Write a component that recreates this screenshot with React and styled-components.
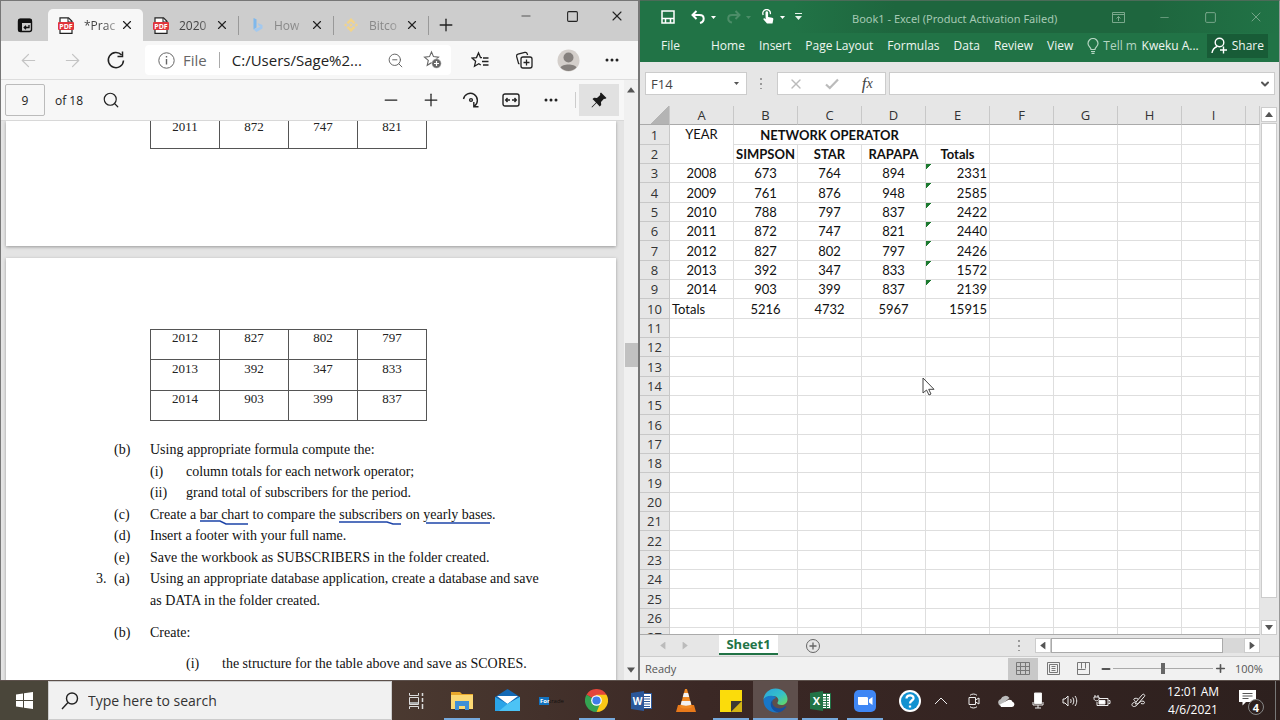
import styled, { createGlobalStyle, css } from "styled-components";
import {
  ArrowLeft,
  ArrowRight,
  ChevronDown,
  Minus,
  Plus,
  Search,
  Square,
  X,
  ZoomOut,
} from "lucide-react";

const browserTabs = [
  { title: "*Prac", icon: <PdfIcon />, active: true },
  { title: "2020", icon: <PdfIcon /> },
  { title: "How", icon: <BingIcon />, faded: true },
  { title: "Bitco", icon: <CoinIcon />, faded: true },
];

const subscribersTop = [["2011", "872", "747", "821"]];
const subscribersRest = [
  ["2012", "827", "802", "797"],
  ["2013", "392", "347", "833"],
  ["2014", "903", "399", "837"],
];

const sheetRows = [
  ["2008", 673, 764, 894, 2331],
  ["2009", 761, 876, 948, 2585],
  ["2010", 788, 797, 837, 2422],
  ["2011", 872, 747, 821, 2440],
  ["2012", 827, 802, 797, 2426],
  ["2013", 392, 347, 833, 1572],
  ["2014", 903, 399, 837, 2139],
];

const columns = ["A", "B", "C", "D", "E", "F", "G", "H", "I"];
const emptyRows = Array.from({ length: 17 }, (_, i) => i + 11);
const ribbonTabs = ["Home", "Insert", "Page Layout", "Formulas", "Data", "Review", "View"];

const apps = [
  { name: "File Explorer", icon: <FolderIcon />, running: true },
  { name: "Mail", icon: <MailIcon /> },
  { name: "Fortrade", icon: <FortradeLogo /> },
  { name: "Chrome", icon: <ChromeIcon />, running: true },
  { name: "Word", icon: <WordIcon /> },
  { name: "VLC", icon: <VlcIcon /> },
  { name: "Sticky Notes", icon: <NotesIcon />, running: true },
  { name: "Edge", icon: <EdgeIcon />, running: true, active: true },
  { name: "Excel", icon: <ExcelIcon />, running: true },
  { name: "Zoom", icon: <ZoomIcon />, running: true },
  { name: "Help", icon: <HelpIcon /> },
];

export default function App() {
  return (
    <>
      <GlobalStyle />
      <Screen>
        <Desktop>
          <Browser />
          <Excel />
        </Desktop>
        <Taskbar />
      </Screen>
    </>
  );
}

function Browser() {
  return (
    <BrowserWindow>
      <TabStrip>
        <TabMenuButton aria-label="Tab actions">
          <svg width="16" height="16" viewBox="0 0 16 16">
            <rect x="1.5" y="2.5" width="13" height="12" rx="2" fill="none" stroke="#111" strokeWidth="1.4" />
            <path d="M1 3.5q0-2 2-2h10q2 0 2 2V6H5v9H3q-2 0-2-2z" fill="#111" />
            <path d="M12 8v2.5H7.5M9 8.7L7.2 10.5 9 12.3" fill="none" stroke="#111" strokeWidth="1.3" />
          </svg>
        </TabMenuButton>
        {browserTabs.map((tab) => (
          <Tab key={tab.title} $active={tab.active} $faded={tab.faded}>
            {tab.icon}
            <TabTitle>{tab.title}</TabTitle>
            <TabClose aria-label="Close tab">
              <X size={14} strokeWidth={2} />
            </TabClose>
          </Tab>
        ))}
        <NewTab aria-label="New tab">
          <Plus size={20} strokeWidth={1.6} />
        </NewTab>
        <WindowButtons>
          <button aria-label="Minimize"><Minus size={14} strokeWidth={1.2} /></button>
          <button aria-label="Maximize"><Square size={13} strokeWidth={2} /></button>
          <button aria-label="Close"><X size={16} strokeWidth={1.6} /></button>
        </WindowButtons>
      </TabStrip>

      <NavBar>
        <NavButton aria-label="Back" $dim><ArrowLeft size={21} strokeWidth={1.4} /></NavButton>
        <NavButton aria-label="Forward" $dim><ArrowRight size={21} strokeWidth={1.4} /></NavButton>
        <NavButton aria-label="Refresh">
          <svg width="20" height="20" viewBox="0 0 20 20" fill="none" stroke="#222" strokeWidth="1.5">
            <path d="M17.5 10.5A7.6 7.6 0 1 1 15.6 5" />
            <path d="M16.5 1.5v5h-5" />
          </svg>
        </NavButton>
        <AddressBar>
          <svg width="17" height="17" viewBox="0 0 17 17" fill="none" stroke="#666">
            <circle cx="8.5" cy="8.5" r="7.7" />
            <path d="M8.5 7v5.5M8.5 4v1.5" strokeWidth="1.4" />
          </svg>
          <Scheme>File</Scheme>
          <AddressInput aria-label="Address" defaultValue="C:/Users/Sage%2..." />
          <AddressIcon aria-label="Zoom out"><ZoomOut size={17} strokeWidth={1.4} /></AddressIcon>
          <AddressIcon aria-label="Add to favorites">
            <svg width="20" height="20" viewBox="0 0 20 20">
              <path d="M8.500 2l2 4.600 5 .5-3.800 3.300 1.100 4.900-4.300-2.600-4.300 2.600 1.100-4.900L1.500 7.100l5-.5z" fill="none" stroke="#666" strokeWidth="1.1" />
              <circle cx="13.5" cy="13.5" r="4.8" fill="#666" stroke="#fff" strokeWidth=".6" />
              <path d="M13.5 11v5M11 13.5h5" stroke="#fff" strokeWidth="1.2" />
            </svg>
          </AddressIcon>
        </AddressBar>
        <NavButton aria-label="Favorites">
          <svg width="19" height="19" viewBox="0 0 19 19" fill="none" stroke="#222" strokeWidth="1.3">
            <path d="M11 6.7L9.5 6.6 7.5 2l-2 4.6-4.5.5 3.6 3.2-1.1 4.9 4.3-2.5 2 1.3M12 7h5.5M11 10.5h6.5M12 14h5.5" />
          </svg>
        </NavButton>
        <NavButton aria-label="Collections">
          <svg width="19" height="19" viewBox="0 0 19 19" fill="none" stroke="#222" strokeWidth="1.3">
            <rect x="6" y="6" width="11" height="11" rx="2" />
            <path d="M4.5 13L3.6 12.6 1.600 5.4a2 2 0 0 1 1.4-2.3L9.8 1.4a2 2 0 0 1 2.4 1.4L12.6 4M11.5 8.5v6M8.5 11.5h6" />
          </svg>
        </NavButton>
        <NavButton aria-label="Profile">
          <svg width="23" height="23" viewBox="0 0 23 23">
            <circle cx="11.5" cy="11.5" r="11" fill="#d4cfcb" />
            <circle cx="11.5" cy="8.5" r="5" fill="#85807d" />
            <path d="M3.5 18.5c1.5-4 14.5-4 16 0a11 11 0 0 1-16 0z" fill="#85807d" />
          </svg>
        </NavButton>
        <NavButton aria-label="Settings and more"><DotsIcon /></NavButton>
      </NavBar>

      <Viewer>
        <ViewerMain>
          <PdfToolbar>
            <PageInput aria-label="Page number" defaultValue="9" />
            <PageCount>of 18</PageCount>
            <PdfButton aria-label="Find"><Search size={18} strokeWidth={1.6} /></PdfButton>
            <Spacer />
            <PdfButton aria-label="Zoom out"><Minus size={20} strokeWidth={1.5} /></PdfButton>
            <PdfButton aria-label="Zoom in"><Plus size={20} strokeWidth={1.5} /></PdfButton>
            <PdfButton aria-label="Rotate">
              <svg width="18" height="18" viewBox="0 0 18 18" fill="none" stroke="#222" strokeWidth="1.4">
                <path d="M1.5 8A7 7 0 1 1 12.500 15M16.500 15.700H11.800V11" />
                <circle cx="9" cy="9" r="1.4" />
              </svg>
            </PdfButton>
            <PdfButton aria-label="Fit to width">
              <svg width="18" height="14" viewBox="0 0 18 14" fill="none" stroke="#222" strokeWidth="1.4">
                <rect x="1" y="1" width="16" height="12" rx="2" />
                <path d="M8 7H4M5.5 5L3.7 7l1.8 2M10 7h4M12.5 5l1.8 2-1.8 2" />
              </svg>
            </PdfButton>
            <PdfButton aria-label="More"><DotsIcon /></PdfButton>
            <Divider />
            <PinButton aria-label="Pin toolbar">
              <svg width="18" height="18" viewBox="0 0 18 18">
                <path d="M11 1.5l5.5 5.5-1.5 1-1-.2-3 3.2.2 3-1.5 1.5L6.500 12 2 16.500 1.500 16 6 11.500 2.500 8 4 6.700l3 .2L10.200 4 10 2.500z" fill="#1a1a1a" />
              </svg>
            </PinButton>
          </PdfToolbar>
          <PdfPages>
            <PdfPage $first>
              <SubscriberTable rows={subscribersTop} />
            </PdfPage>
            <PdfPage>
              <SubscriberTable rows={subscribersRest} />
              <Questions>
                <Question><span /><span>(b)</span><p>Using appropriate formula compute the:</p></Question>
                <Question $level={1}><span>(i)</span><p>column totals for each network operator;</p></Question>
                <Question $level={1}><span>(ii)</span><p>grand total of subscribers for the period.</p></Question>
                <Question>
                  <span /><span>(c)</span>
                  <p>
                    Create a <Ink d="M0 2h20l6 3h22">bar chart</Ink> to compare the{" "}
                    <Ink d="M0 3h48l6 2h8">subscribers</Ink> on <Ink d="M3 4h64">yearly bases</Ink>.
                  </p>
                </Question>
                <Question><span /><span>(d)</span><p>Insert a footer with your full name.</p></Question>
                <Question><span /><span>(e)</span><p>Save the workbook as SUBSCRIBERS in the folder created.</p></Question>
                <Question>
                  <span>3.</span><span>(a)</span>
                  <p>
                    Using an appropriate database application, create a database and save
                    <br />
                    as DATA in the folder created.
                  </p>
                </Question>
                <Question $spaced><span /><span>(b)</span><p>Create:</p></Question>
                <Question $level={2} $spaced><span>(i)</span><p>the structure for the table above and save as SCORES.</p></Question>
              </Questions>
            </PdfPage>
          </PdfPages>
        </ViewerMain>
        <BrowserScroll>
          <ScrollArrow $dir="up" />
          <BrowserThumb />
          <ScrollArrow $dir="down" />
        </BrowserScroll>
      </Viewer>
    </BrowserWindow>
  );
}

function SubscriberTable({ rows }) {
  return (
    <PaperTable>
      <tbody>
        {rows.map((row) => (
          <tr key={row[0]}>
            {row.map((cell, i) => (
              <td key={i}>{cell}</td>
            ))}
          </tr>
        ))}
      </tbody>
    </PaperTable>
  );
}

function Ink({ d, children }) {
  return (
    <InkWord>
      {children}
      <svg height="8" width="100%" fill="none" stroke="#1d44a8" strokeWidth="1.6">
        <path d={d} />
      </svg>
    </InkWord>
  );
}

function Excel() {
  return (
    <ExcelWindow>
      <TitleBar>
        <QuickAccess>
          <button aria-label="Save">
            <svg width="14" height="14" viewBox="0 0 14 14" fill="none" stroke="#fff" strokeWidth="1.5">
              <path d="M1 1h12v12H1z" />
              <path d="M1 8.500h12M4.500 9v4M9.500 9v4" />
            </svg>
          </button>
          <button aria-label="Undo">
            <UndoIcon />
            <Caret />
          </button>
          <RedoButton aria-label="Redo">
            <UndoIcon flip />
            <Caret />
          </RedoButton>
          <button aria-label="Touch mode">
            <svg width="14" height="16" viewBox="0 0 14 16">
              <path d="M4.500 5.500V3.500a1.300 1.300 0 0 1 2.600 0V8l4 .8c1 .2 1.400.8 1.200 1.800l-.8 4H6L2.500 10.500c-.5-.8.6-1.600 1.300-1l.9.8z" fill="#fff" />
              <path d="M2.200 6A3.800 3.800 0 1 1 9.300 5.200" fill="none" stroke="#fff" strokeWidth="1.3" />
            </svg>
            <Caret />
          </button>
          <button aria-label="Customize toolbar">
            <svg width="7" height="8" viewBox="0 0 7 8"><path d="M0 0h7v1H0zM0 3h7L3.500 7z" fill="#e6f2eb" /></svg>
          </button>
        </QuickAccess>
        <BookTitle>Book1 - Excel (Product Activation Failed)</BookTitle>
        <ExcelButtons>
          <button aria-label="Ribbon display">
            <svg width="13" height="11" viewBox="0 0 13 11" fill="none" stroke="currentColor">
              <path d="M.5.5h12v10H.5zM.5 2.500h12M6.500 9V4.500M4.500 6.500l2-2 2 2" />
            </svg>
          </button>
          <button aria-label="Minimize"><Minus size={13} strokeWidth={1.4} /></button>
          <button aria-label="Maximize"><Square size={13} strokeWidth={1.8} /></button>
          <button aria-label="Close"><X size={16} strokeWidth={1.4} /></button>
        </ExcelButtons>
      </TitleBar>

      <Ribbon>
        <FileTab>File</FileTab>
        {ribbonTabs.map((tab) => (
          <RibbonTab key={tab}>{tab}</RibbonTab>
        ))}
        <TellMe>
          <svg width="12" height="16" viewBox="0 0 12 16" fill="none" stroke="currentColor" strokeWidth="1.2">
            <path d="M4 11.500C4 9 1 8.500 1 5.500a5 5 0 0 1 10 0c0 3-3 3.500-3 6zM4 13.500h4M4.500 15.300h3" />
          </svg>
          Tell m
        </TellMe>
        <Account>Kweku A...</Account>
        <ShareButton>
          <svg width="17" height="17" viewBox="0 0 17 17" fill="none" stroke="#fff" strokeWidth="1.4">
            <circle cx="8.5" cy="5.5" r="4.3" />
            <path d="M1 16c.5-3.500 2.500-5.500 5-6.500M12.500 9.500v7M9 13h7" />
          </svg>
          Share
        </ShareButton>
      </Ribbon>

      <FormulaRow>
        <NameBox>
          <input aria-label="Name box" defaultValue="F14" />
          <Caret />
        </NameBox>
        <Grip />
        <FormulaTools>
          <button aria-label="Cancel"><X size={16} strokeWidth={2} /></button>
          <button aria-label="Enter">
            <svg width="14" height="12" viewBox="0 0 14 12" fill="none" stroke="currentColor" strokeWidth="2.2">
              <path d="M1 6.500L4.800 10 13 1.500" />
            </svg>
          </button>
          <FxButton aria-label="Insert function">f<small>x</small></FxButton>
        </FormulaTools>
        <FormulaBox>
          <input aria-label="Formula bar" />
          <ChevronDown size={12} strokeWidth={4} />
        </FormulaBox>
      </FormulaRow>

      <SheetArea>
        <SheetClip>
          <Sheet>
            <colgroup>
              <col width="30" />
              {columns.map((c) => (
                <col key={c} width="64" />
              ))}
              <col />
            </colgroup>
            <thead>
              <tr>
                <Corner aria-label="Select all" />
                {columns.map((c) => (
                  <th key={c}>{c}</th>
                ))}
                <th />
              </tr>
            </thead>
            <tbody>
              <tr>
                <th>1</th>
                <Cell rowSpan="2" $top>YEAR</Cell>
                <Cell colSpan="3" $bold>NETWORK OPERATOR</Cell>
                <Blanks count={6} />
              </tr>
              <tr>
                <th>2</th>
                <Cell $bold>SIMPSON</Cell>
                <Cell $bold>STAR</Cell>
                <Cell $bold>RAPAPA</Cell>
                <Cell $bold>Totals</Cell>
                <Blanks count={5} />
              </tr>
              {sheetRows.map(([year, simpson, star, rapapa, total], i) => (
                <tr key={year}>
                  <th>{i + 3}</th>
                  <Cell>{year}</Cell>
                  <Cell>{simpson}</Cell>
                  <Cell>{star}</Cell>
                  <Cell>{rapapa}</Cell>
                  <Cell $align="right" $flag>{total}</Cell>
                  <Blanks count={5} />
                </tr>
              ))}
              <tr>
                <th>10</th>
                <Cell $align="left">Totals</Cell>
                <Cell>5216</Cell>
                <Cell>4732</Cell>
                <Cell>5967</Cell>
                <Cell $align="right">15915</Cell>
                <Blanks count={5} />
              </tr>
              {emptyRows.map((n) => (
                <tr key={n}>
                  <th>{n}</th>
                  <Blanks count={10} />
                </tr>
              ))}
            </tbody>
          </Sheet>
          <Pointer width="13" height="19" viewBox="0 0 13 19">
            <path d="M1 1v15l3.500-3 2.500 5 2-1-2.300-4.700H12z" fill="#fff" stroke="#444" />
          </Pointer>
        </SheetClip>
        <SheetScroll>
          <ScrollButton aria-label="Scroll up"><ScrollArrow $dir="up" /></ScrollButton>
          <SheetThumb />
          <ScrollButton aria-label="Scroll down"><ScrollArrow $dir="down" /></ScrollButton>
        </SheetScroll>
      </SheetArea>

      <SheetTabs>
        <SheetNav><ScrollArrow $dir="left" $dim /><ScrollArrow $dir="right" $dim /></SheetNav>
        <SheetTab>Sheet1</SheetTab>
        <AddSheet aria-label="New sheet">
          <svg width="14" height="14" viewBox="0 0 14 14" fill="none" stroke="#666">
            <circle cx="7" cy="7" r="6.5" />
            <path d="M7 3.500v7M3.500 7h7" strokeWidth="1.3" />
          </svg>
        </AddSheet>
        <Spacer />
        <Grip />
        <HScroll>
          <ScrollButton aria-label="Scroll left"><ScrollArrow $dir="left" /></ScrollButton>
          <HThumb />
          <ScrollButton aria-label="Scroll right"><ScrollArrow $dir="right" /></ScrollButton>
        </HScroll>
      </SheetTabs>

      <StatusBar>
        <span>Ready</span>
        <Spacer />
        <ViewButton aria-label="Normal view" $active>
          <svg width="14" height="13" viewBox="0 0 14 13" fill="none" stroke="#777"><path d="M.5.5h13v12H.5zM.5 4.500h13M.5 8.500h13M4.500.5v12M9.500.5v12" /></svg>
        </ViewButton>
        <ViewButton aria-label="Page layout view">
          <svg width="13" height="13" viewBox="0 0 13 13" fill="none" stroke="#777"><path d="M.5.5h12v12H.5zM2.500 2.500h8v8h-8zM4.500 4.500h4M4.500 6.500h4M4.500 8.500h4" /></svg>
        </ViewButton>
        <ViewButton aria-label="Page break view">
          <svg width="13" height="13" viewBox="0 0 13 13" fill="none" stroke="#777"><path d="M.5.5h12v12H.5zM4.500.5v6M8.500.5v6M.5 7.500h8" /></svg>
        </ViewButton>
        <ZoomStep aria-label="Zoom out"><Minus size={12} strokeWidth={4} /></ZoomStep>
        <ZoomRange type="range" aria-label="Zoom" min="0" max="100" defaultValue="50" />
        <ZoomStep aria-label="Zoom in"><Plus size={13} strokeWidth={3} /></ZoomStep>
        <ZoomValue>100%</ZoomValue>
      </StatusBar>
    </ExcelWindow>
  );
}

function Blanks({ count }) {
  return Array.from({ length: count }, (_, i) => <Cell key={i} />);
}

function Taskbar() {
  return (
    <TaskbarRow>
      <StartButton aria-label="Start">
        <svg width="17" height="17" viewBox="0 0 17 17" fill="#fff">
          <path d="M0 2.500L7 1.500V8H0zM8 1.300L17 0v8H8zM0 9h7v6.500L0 14.500zM8 9h9v8l-9-1.300z" />
        </svg>
      </StartButton>
      <SearchBox>
        <svg width="18" height="18" viewBox="0 0 18 18" fill="none" stroke="#222" strokeWidth="1.4">
          <circle cx="11" cy="6.5" r="5.5" />
          <path d="M7 10.500L1 17" />
        </svg>
        <input aria-label="Search" placeholder="Type here to search" />
      </SearchBox>
      <Apps>
        <TaskViewButton aria-label="Task View"><TaskViewIcon /></TaskViewButton>
        {apps.map((app) => (
          <AppButton key={app.name} aria-label={app.name} $running={app.running} $active={app.active}>
            {app.icon}
          </AppButton>
        ))}
      </Apps>
      <Tray>
        <TrayCaret aria-label="Show hidden icons">
          <svg width="14" height="8" viewBox="0 0 14 8"><path d="M1 7l6-6 6 6" /></svg>
        </TrayCaret>
        <TrayButton aria-label="Meet now">
          <svg width="14" height="16" viewBox="0 0 14 16"><path d="M2 4.500h6.500v7H2zM8.500 7L12 5v6L8.500 9M3 2.300c2-1.700 5-1.700 7 0M3 13.700c2 1.700 5 1.700 7 0" /></svg>
        </TrayButton>
        <TrayButton aria-label="OneDrive">
          <svg width="18" height="12" viewBox="0 0 18 12">
            <path d="M4 11a3.500 3.500 0 0 1-.3-6.800A5 5 0 0 1 12.500 3l-6 5z" fill="#bbb" stroke="none" />
            <path d="M3 9.500l8.500-4.700c3-.5 3.800 1.200 3.900 1.900A2.700 2.700 0 0 1 15 12H4z" fill="#fff" stroke="none" />
          </svg>
        </TrayButton>
        <TrayButton aria-label="Microphone">
          <svg width="12" height="17" viewBox="0 0 12 17"><path d="M2.500 1h7v10.500h-7z" fill="#fff" /><path d="M1 10v3h10v-3M6 13v3M3 16h6" /></svg>
        </TrayButton>
        <TrayButton aria-label="Volume">
          <svg width="16" height="14" viewBox="0 0 16 14"><path d="M1 5h2l3-3v10L3 9H1zM8.500 5c.8 1 .8 3 0 4M10.700 3.500c1.500 2 1.500 5 0 7M13 2c2.300 3 2.300 7 0 10" /></svg>
        </TrayButton>
        <TrayButton aria-label="Battery">
          <svg width="18" height="14" viewBox="0 0 18 14"><path d="M6 4.500h9v7H4V8M15.500 6.500h1.500v3h-1.500" /><path d="M6 6.500h6v3.500H6z" fill="#fff" /><path d="M2 1v2M5 1v2M1 3h5v1.500c0 3-5 3-5 0z" /></svg>
        </TrayButton>
        <PenButton aria-label="Windows Ink">
          <svg width="15" height="15" viewBox="0 0 15 15"><path d="M5 9l6.500-7.500c1-1 3 .6 2 1.800L7 10.800 4.500 11zM7 6C4 4 1.500 6.500 3.500 7.500S4 9 2 10s-1 4 1.500 3.500S7 10.500 9 9s4.500-1 4.500.5-2 1.500-3.500 1" /></svg>
        </PenButton>
        <Clock>
          <span>12:01 AM</span>
          <span>4/6/2021</span>
        </Clock>
        <Notifications aria-label="4 notifications">
          <svg width="18" height="16" viewBox="0 0 18 16">
            <path d="M0 0h17v12H7l-3.500 3.500V12H0z" fill="#fff" />
            <path d="M3.500 3.500h10M3.500 6h10M3.500 8.500h6" stroke="#555" />
          </svg>
          <Badge>4</Badge>
        </Notifications>
      </Tray>
    </TaskbarRow>
  );
}

/* ---------- icons ---------- */

function PdfIcon() {
  return (
    <svg width="16" height="17" viewBox="0 0 16 17">
      <path d="M2 .8h8.500L14 4.300v12H2z" fill="#fff" stroke="#222" strokeWidth="1.2" />
      <path d="M10 1v4h4" fill="none" stroke="#222" />
      <rect y="5" width="16" height="8" rx="1" fill="#e0353b" />
      <text x="8" y="11.5" textAnchor="middle" fontSize="7" fontWeight="700" fill="#fff" fontFamily="Open Sans, sans-serif">PDF</text>
    </svg>
  );
}

function BingIcon() {
  return (
    <svg width="16" height="16" viewBox="0 0 16 16">
      <path d="M5.500 1l3 1.200v8.300l-3 2z" fill="#7fb8ec" />
      <path d="M5.500 12.500L8.500 15l6-3.500V8L9.500 6l1.300 3 1.700.8z" fill="#a4c9ee" />
    </svg>
  );
}

function CoinIcon() {
  return (
    <svg width="16" height="16" viewBox="0 0 16 16" fill="#f3d489">
      <path d="M8 1l4.500 4.400-1.800 1.700L8 4.500 5.300 7.100 3.500 5.400zM8 6.300L9.700 8 8 9.700 6.300 8zM2.500 6.400L4.100 8 2.500 9.600 1 8zM13.500 6.400L15 8l-1.500 1.600L11.900 8zM5.300 8.900L8 11.500l2.700-2.600 1.800 1.700L8 15l-4.500-4.400z" />
    </svg>
  );
}

function DotsIcon() {
  return (
    <svg width="14" height="4" viewBox="0 0 14 4" fill="#222">
      <circle cx="2" cy="2" r="1.5" />
      <circle cx="7" cy="2" r="1.5" />
      <circle cx="12" cy="2" r="1.5" />
    </svg>
  );
}

function UndoIcon({ flip }) {
  return (
    <svg width="15" height="14" viewBox="0 0 15 14" fill="none" stroke="currentColor" strokeWidth="2">
      {flip ? (
        <path d="M14 5H6C1 5 1 11.500 6 12.500M9.500 1l4 4-4 4" />
      ) : (
        <path d="M1 5h7.500c5.500 0 5.500 6.500.5 8M5.500 1l-4 4 4 4" />
      )}
    </svg>
  );
}

function Caret() {
  return (
    <svg width="5" height="3" viewBox="0 0 5 3" fill="currentColor">
      <path d="M0 0h5L2.500 3z" />
    </svg>
  );
}

function TaskViewIcon() {
  return (
    <svg width="17" height="16" viewBox="0 0 17 16" fill="none" stroke="#ddd">
      <path d="M1.500 0v2.500h9V0M1.500 16v-2.500h9V16M1.500 4.500h9v7h-9z" />
      <path d="M2 9h8v2H2z" fill="#aaa" stroke="none" />
      <path d="M14.500 0v3M14.500 5v4M14.500 11v5" strokeWidth="1.5" />
    </svg>
  );
}

function FolderIcon() {
  return (
    <svg width="22" height="20" viewBox="0 0 22 20">
      <path d="M0 1h9l2 2h11v14H0z" fill="#e9a82b" />
      <path d="M0 4h22v14H0z" fill="#fcd974" />
      <path d="M4 10h14v9h-4v-4H8v4H4z" fill="#3f8fd6" />
    </svg>
  );
}

function MailIcon() {
  return (
    <svg width="25" height="23" viewBox="0 0 25 23">
      <path d="M0 8L12.500 0 25 8v14H0z" fill="#1469b5" />
      <path d="M2 7h21l-10.500 8z" fill="#fff" />
      <path d="M0 8l12.500 7L25 8v14H0z" fill="#2aa4e8" />
      <path d="M12.500 15L25 8v14H4z" fill="#4cc3f5" />
    </svg>
  );
}

function FortradeLogo() {
  return (
    <svg width="25" height="9" viewBox="0 0 25 9">
      <rect width="10" height="8" y="1" fill="#1272bf" />
      <text x="1" y="7" fontSize="6" fontWeight="700" fill="#fff" fontFamily="Open Sans, sans-serif">For</text>
      <text x="10" y="7" fontSize="6" fill="#151010" fontFamily="Open Sans, sans-serif">trade</text>
    </svg>
  );
}

function ChromeIcon() {
  return (
    <svg width="23" height="23" viewBox="0 0 24 24">
      <path d="M12 12L1.600 6A12 12 0 0 1 22.400 6z" fill="#e3453a" />
      <path d="M12 12L1.600 6A12 12 0 0 0 12 24l5.200-9z" fill="#34a351" />
      <path d="M12 12h5.200L12 24A12 12 0 0 0 22.400 6H12z" fill="#fbc816" />
      <circle cx="12" cy="12" r="5.6" fill="#fff" />
      <circle cx="12" cy="12" r="4.3" fill="#3f7de8" />
    </svg>
  );
}

function WordIcon() {
  return (
    <svg width="21" height="20" viewBox="0 0 21 20">
      <rect x="10" y="2.5" width="10.5" height="15" fill="#fff" stroke="#2b579a" />
      <path d="M12 5.500h7M12 8h7M12 10.500h7M12 13h7M12 15.500h7" stroke="#2b579a" />
      <path d="M0 2l13-2v20L0 18z" fill="#2b579a" />
      <text x="6.5" y="14" textAnchor="middle" fontSize="10" fontWeight="700" fill="#fff" fontFamily="Open Sans, sans-serif">W</text>
    </svg>
  );
}

function ExcelIcon() {
  return (
    <svg width="21" height="20" viewBox="0 0 21 20">
      <rect x="10" y="2.5" width="10.5" height="15" fill="#fff" stroke="#217346" />
      <path d="M12 5.500h7M12 8h7M12 10.500h7M12 13h7M12 15.500h7M16.500 3v14" stroke="#217346" />
      <path d="M0 2l13-2v20L0 18z" fill="#217346" />
      <text x="6.5" y="14" textAnchor="middle" fontSize="11" fontWeight="700" fill="#fff" fontFamily="Open Sans, sans-serif">X</text>
    </svg>
  );
}

function VlcIcon() {
  return (
    <svg width="20" height="23" viewBox="0 0 20 23">
      <path d="M2 16h16l2 7H0z" fill="#e8791a" />
      <path d="M9 0h2l5 18c-1.500 2-10.500 2-12 0z" fill="#f08a24" />
      <path d="M7.900 4h4.200l1.100 4H6.800zM5.700 12h8.600l1 3.500c-2 1.500-8.600 1.500-10.600 0z" fill="#f2f2f2" />
    </svg>
  );
}

function NotesIcon() {
  return (
    <svg width="22" height="22" viewBox="0 0 22 22">
      <path d="M0 0h22v11L11 22H0z" fill="#fbdc0b" />
      <path d="M11 22V11h11z" fill="#3b3a33" />
      <path d="M11 22L22 11v11z" fill="#d3b514" />
    </svg>
  );
}

function EdgeIcon() {
  return (
    <svg width="25" height="25" viewBox="0 0 25 25">
      <defs>
        <linearGradient id="edgeTop" x1="0" y1="0" x2="1" y2="1">
          <stop offset="0" stopColor="#2aa3dc" />
          <stop offset="0.55" stopColor="#35c1c9" />
          <stop offset="1" stopColor="#6bdc55" />
        </linearGradient>
      </defs>
      <path d="M.5 12A12 12 0 0 1 12.500.5C20 .5 24.500 6 24.500 11c0 4-3 6-6 6s-4.500-1.200-4-2.500c2.500-3-.5-6.500-4-6.500C5 8 1 10 .5 12z" fill="url(#edgeTop)" />
      <path d="M.5 12c1-3 4.500-4.500 8-4.300 2.500.2 4 1.300 4.500 2.300-3 .5-4.500 3.500-4 6.500.5 4 4 7.500 7 7.700C8 26 .3 20.500.5 12z" fill="#1877c8" />
      <path d="M10 11.500c-2 3 0 8 5 8.800 3 .4 6-.8 7.500-2 .8-.3.900.3.500.9-2 3-5 5-8 5.100C8 23 5.500 15 10 11.500z" fill="#15509f" />
    </svg>
  );
}

function ZoomIcon() {
  return (
    <svg width="22" height="22" viewBox="0 0 22 22">
      <rect width="22" height="22" rx="5" fill="#3f87f5" />
      <path d="M4 7h8.500c1 0 1.500.5 1.500 1.500V15H5.500C4.500 15 4 14.500 4 13.500zM15 9.500L18.500 7v8L15 12.500z" fill="#fff" />
    </svg>
  );
}

function HelpIcon() {
  return (
    <svg width="22" height="22" viewBox="0 0 22 22">
      <circle cx="11" cy="11" r="11" fill="#fff" />
      <circle cx="11" cy="11" r="9" fill="#1191d0" />
      <path d="M7.500 8.500c0-4.500 7.500-4 7 0-.3 2-3.500 2.300-3.500 5M11 15.500v2" fill="none" stroke="#fff" strokeWidth="2.3" />
    </svg>
  );
}

/* ---------- page ---------- */

const GlobalStyle = createGlobalStyle`
  * {
    box-sizing: border-box;
  }
  body {
    margin: 0;
    font-family: "Open Sans", "Noto Sans", sans-serif;
    font-size: 12px;
    color: #222;
  }
  button, input {
    font: inherit;
    color: inherit;
    border: 0;
    padding: 0;
    margin: 0;
    background: none;
    outline: none;
  }
  svg {
    display: block;
    flex: none;
  }
`;

const center = css`
  display: flex;
  align-items: center;
  justify-content: center;
`;

const Screen = styled.div`
  height: 100vh;
  display: flex;
  flex-direction: column;
  overflow: hidden;
`;

const Desktop = styled.main`
  flex: 1;
  min-height: 0;
  display: grid;
  grid-template-columns: 1fr 1fr;
`;

const Spacer = styled.div`
  flex: 1;
`;

/* ---------- browser ---------- */

const BrowserWindow = styled.section`
  display: flex;
  flex-direction: column;
  min-width: 0;
  min-height: 0;
  border: 1px solid #777;
  border-right: 2px solid #777;
  border-bottom: 0;
  background: #f7f7f7;
`;

const TabStrip = styled.div`
  display: flex;
  align-items: flex-end;
  height: 40px;
  background: #cdcdcd;
`;

const TabMenuButton = styled.button`
  ${center}
  width: 47px;
  height: 32px;
`;

const separator = css`
  background-image: linear-gradient(#999, #999);
  background-size: 1px 19px;
  background-repeat: no-repeat;
  background-position: 0 7px;
`;

const Tab = styled.div`
  display: flex;
  align-items: center;
  width: 95px;
  height: 32px;
  padding-left: 10px;
  border-radius: 5px 5px 0 0;
  background-color: ${(props) => (props.$active ? "#f7f7f7" : "transparent")};
  color: ${(props) => (props.$faded ? "#888" : "#444")};
  ${(props) => props.$faded && separator}
`;

const TabTitle = styled.span`
  width: 33px;
  margin-left: 10px;
  overflow: hidden;
  white-space: nowrap;
  mask-image: linear-gradient(to right, #000 60%, rgba(0, 0, 0, 0.3));
`;

const TabClose = styled.button`
  ${center}
  width: 20px;
  height: 24px;
  color: #222;
`;

const NewTab = styled.button`
  ${center}
  ${separator}
  width: 35px;
  height: 32px;
`;

const WindowButtons = styled.div`
  display: flex;
  align-self: flex-start;
  margin-left: auto;

  & button {
    ${center}
    width: 46px;
    height: 30px;
  }
  & button:last-child {
    width: 43px;
  }
`;

const NavBar = styled.div`
  display: flex;
  align-items: center;
  height: 39px;
  padding: 0 4px 0 5px;
  border-bottom: 1px solid #ddd;
`;

const NavButton = styled.button`
  ${center}
  width: 44px;
  height: 34px;
  flex: none;
  color: ${(props) => (props.$dim ? "#c4c4c4" : "#222")};
`;

const AddressBar = styled.div`
  flex: 1;
  min-width: 0;
  display: flex;
  align-items: center;
  height: 30px;
  margin: 0 7px;
  padding-left: 13px;
  border-radius: 4px;
  background: #fff;
`;

const Scheme = styled.span`
  margin-left: 8px;
  padding-right: 12px;
  border-right: 1px solid #aaa;
  line-height: 16px;
  font-size: 15px;
  color: #666;
`;

const AddressInput = styled.input`
  flex: 1;
  min-width: 0;
  margin-left: 12px;
  font-size: 15px;
`;

const AddressIcon = styled.button`
  ${center}
  width: 37px;
  height: 30px;
  color: #666;
`;

const Viewer = styled.div`
  flex: 1;
  min-height: 0;
  display: flex;
`;

const ViewerMain = styled.div`
  flex: 1;
  min-width: 0;
  display: flex;
  flex-direction: column;
`;

const PdfToolbar = styled.div`
  display: flex;
  align-items: center;
  flex: none;
  height: 41px;
  padding: 0 5px 0 4px;
  border-bottom: 1px solid #d8d8d8;
`;

const PageInput = styled.input`
  width: 40px;
  height: 32px;
  border: 1px solid #bbb;
  border-radius: 2px;
  text-align: center;
`;

const PageCount = styled.span`
  width: 36px;
  margin-left: 10px;
`;

const PdfButton = styled.button`
  ${center}
  width: 40px;
  height: 32px;
`;

const Divider = styled.span`
  width: 1px;
  height: 16px;
  margin: 0 3px 0 4px;
  background: #ccc;
`;

const PinButton = styled(PdfButton)`
  background: #e1e1e1;
`;

const PdfPages = styled.div`
  flex: 1;
  min-height: 0;
  overflow: hidden;
  display: flex;
  flex-direction: column;
  gap: 12px;
  padding: 0 8px 0 5px;
  background: #e4e4e4;
  font-family: "Liberation Serif", serif;
`;

const PdfPage = styled.article`
  flex: none;
  height: ${(props) => (props.$first ? "125px" : "auto")};
  padding: ${(props) => (props.$first ? "0 0 0 144px" : "71px 0 24px 90px")};
  background: #fff;
  box-shadow: 0 1px 3px #999;

  & table {
    margin-left: ${(props) => (props.$first ? "0" : "54px")};
    margin-top: ${(props) => (props.$first ? "-3px" : "0")};
  }
`;

const PaperTable = styled.table`
  border-collapse: collapse;
  table-layout: fixed;
  width: 277px;
  font-size: 13px;

  & td {
    height: 30px;
    padding: 0 0 14px;
    border: 1px solid #555;
    text-align: center;
    line-height: 15px;
  }
  & tr:nth-child(2) td {
    height: 31px;
  }
`;

const Questions = styled.div`
  margin-top: 18px;
  font-size: 14px;
  color: #111;
`;

const Question = styled.div`
  display: grid;
  grid-template-columns: ${(props) => (props.$level ? "36px 1fr" : "18px 36px 1fr")};
  margin-top: ${(props) => (props.$spaced ? "10px" : "0")};
  margin-left: ${(props) => (props.$level ? props.$level * 36 + 18 : 0)}px;
  line-height: 22px;

  & p {
    margin: 0;
  }
  &:nth-child(even) {
    line-height: 21px;
  }
`;

const InkWord = styled.span`
  position: relative;

  & svg {
    position: absolute;
    left: 0;
    bottom: -5px;
  }
`;

const BrowserScroll = styled.div`
  display: flex;
  flex-direction: column;
  align-items: center;
  justify-content: space-between;
  width: 14px;
  padding: 6px 0;
  background: #f0f0f0;
`;

const BrowserThumb = styled.div`
  width: 13px;
  height: 24px;
  margin-bottom: 50px;
  background: #c1c1c1;
`;

const arrows = {
  up: "polygon(50% 15%, 100% 80%, 0 80%)",
  down: "polygon(0 20%, 100% 20%, 50% 85%)",
  left: "polygon(15% 50%, 80% 0, 80% 100%)",
  right: "polygon(85% 50%, 20% 0, 20% 100%)",
};

const ScrollArrow = styled.span`
  width: 8px;
  height: 8px;
  background: ${(props) => (props.$dim ? "#bbb" : "#555")};
  clip-path: ${(props) => arrows[props.$dir]};
`;

/* ---------- excel ---------- */

const ExcelWindow = styled.section`
  display: flex;
  flex-direction: column;
  min-width: 0;
  min-height: 0;
  border-top: 1px solid #4b6b58;
  border-right: 1px solid #999;
  background: #e6e6e6;
`;

const TitleBar = styled.div`
  display: flex;
  align-items: center;
  height: 32px;
  background: linear-gradient(to right, #217346 24%, #1e663e 40%, #1e663e 80%, #217346);
  color: #fff;
`;

const QuickAccess = styled.div`
  display: flex;
  align-items: center;
  gap: 10px;
  padding-left: 21px;

  & button {
    ${center}
    gap: 5px;
    height: 24px;
  }
  & button:first-child {
    margin-right: 6px;
  }
`;

const RedoButton = styled.button`
  color: #4c8d68;
`;

const BookTitle = styled.span`
  flex: 1;
  padding-left: 50px;
  padding-top: 2px;
  white-space: nowrap;
  font-family: "Noto Sans", sans-serif;
  font-size: 11px;
  color: #a5c9b4;
`;

const ExcelButtons = styled.div`
  display: flex;
  color: #7aa88c;

  & button {
    ${center}
    width: 46px;
    height: 28px;
  }
`;

const Ribbon = styled.div`
  display: flex;
  align-items: center;
  height: 29px;
  padding: 0 11px 4px 21px;
  background: #217346;
  color: #eef6f1;
`;

const RibbonTab = styled.button`
  margin-right: 14px;
  white-space: nowrap;
`;

const FileTab = styled(RibbonTab)`
  margin-right: 31px;
`;

const TellMe = styled.button`
  display: flex;
  align-items: center;
  gap: 4px;
  white-space: nowrap;
  color: #b5d5c2;
`;

const Account = styled.button`
  margin-left: auto;
  margin-right: 8px;
  white-space: nowrap;
`;

const ShareButton = styled.button`
  display: flex;
  align-items: center;
  gap: 4px;
  height: 24px;
  padding: 0 4px;
  background: #185c37;
`;

const FormulaRow = styled.div`
  display: flex;
  height: 44px;
  padding: 10px 4px 11px 5px;
`;

const NameBox = styled.div`
  display: flex;
  align-items: center;
  width: 102px;
  padding: 0 7px 0 5px;
  border: 1px solid #ccc;
  background: #fff;
  color: #555;

  & input {
    flex: 1;
    min-width: 0;
    font-size: 13px;
    color: #444;
  }
`;

const Grip = styled.span`
  align-self: center;
  width: 2px;
  height: 11px;
  margin: 0 15px 0 13px;
  background: repeating-linear-gradient(#999 0 2px, transparent 2px 5px);
`;

const FormulaTools = styled.div`
  display: flex;
  width: 109px;
  border: 1px solid #ccc;
  background: #fff;
  color: #bbb;

  & button {
    ${center}
    flex: 1;
  }
`;

const FxButton = styled.button`
  font-family: "Liberation Serif", serif;
  font-size: 17px;
  font-style: italic;
  color: #444;
`;

const FormulaBox = styled.div`
  flex: 1;
  display: flex;
  align-items: center;
  margin-left: 3px;
  padding-right: 3px;
  border: 1px solid #ccc;
  background: #fff;
  color: #555;

  & input {
    flex: 1;
    min-width: 0;
  }
`;

const SheetArea = styled.div`
  flex: 1;
  min-height: 0;
  display: flex;
`;

const SheetClip = styled.div`
  position: relative;
  flex: 1;
  min-width: 0;
  overflow: hidden;
  border-bottom: 1px solid #aaa;
`;

const Sheet = styled.table`
  width: 100%;
  border-collapse: separate;
  border-spacing: 0;
  table-layout: fixed;
  background: #fff;
  font-family: Lato, "Open Sans", sans-serif;
  font-size: 13px;
  line-height: 18px;

  & th {
    padding: 0;
    background: #e6e6e6;
    border-right: 1px solid #c8c8c8;
    border-bottom: 1px solid #c8c8c8;
    font-family: "Open Sans", sans-serif;
    font-weight: 400;
    color: #333;
  }
  & tr {
    height: 19px;
  }
  & tbody tr:nth-child(3n + 1) {
    height: 20px;
  }
  & thead th {
    border-bottom-color: #aaa;
  }
  & ${() => Corner} {
    background: linear-gradient(135deg, #e6e6e6 60%, #b4b4b4 60%);
  }
`;

const Corner = styled.th``;

const Cell = styled.td`
  padding: 0 2px;
  border-right: 1px solid #dedede;
  border-bottom: 1px solid #dedede;
  text-align: ${(props) => props.$align || "center"};
  vertical-align: ${(props) => (props.$top ? "top" : "middle")};
  font-weight: ${(props) => (props.$bold ? 700 : 400)};
  color: #111;
  white-space: nowrap;
  ${(props) =>
    props.$flag &&
    css`
      background: linear-gradient(135deg, #1c7a30 4px, transparent 4px);
    `}
`;

const Pointer = styled.svg`
  position: absolute;
  left: 282px;
  top: 271px;
`;

const SheetScroll = styled.div`
  display: flex;
  flex-direction: column;
  width: 18px;
  padding: 1px 2px 0 0;
  margin-left: 1px;
`;

const ScrollButton = styled.button`
  ${center}
  flex: none;
  width: 16px;
  height: 15px;
  border: 1px solid #ccc;
  background: #fff;
`;

const SheetThumb = styled.div`
  flex: 1;
  margin: 1px 0 22px;
  border: 1px solid #ccc;
  background: #fff;
`;

const SheetTabs = styled.div`
  display: flex;
  height: 22px;
  padding-right: 19px;
  border-bottom: 1px solid #ccc;
`;

const SheetNav = styled.div`
  display: flex;
  align-items: center;
  gap: 14px;
  width: 79px;
  padding-left: 19px;
`;

const SheetTab = styled.button`
  width: 59px;
  height: 20px;
  border-bottom: 2px solid #217346;
  background: #fff;
  font-size: 13px;
  font-weight: 700;
  line-height: 16px;
  color: #217346;
`;

const AddSheet = styled.button`
  margin-left: 28px;
`;

const HScroll = styled.div`
  display: flex;
  align-self: center;
  width: 225px;
  background: #d8d8d8;
`;

const HThumb = styled.div`
  flex: 1;
  margin-right: 21px;
  border: 1px solid #aaa;
  background: #fff;
`;

const StatusBar = styled.footer`
  display: flex;
  align-items: center;
  height: 23px;
  padding: 0 15px 0 5px;
  background: #f1f1f1;
  font-size: 11px;
  color: #555;
`;

const ViewButton = styled.button`
  ${center}
  width: 30px;
  height: 22px;
  background: ${(props) => (props.$active ? "#c8c8c8" : "transparent")};
`;

const ZoomStep = styled.button`
  ${center}
  width: 15px;
  height: 20px;
`;

const ZoomRange = styled.input`
  appearance: none;
  width: 100px;
  height: 12px;
  background: linear-gradient(#aaa, #aaa) center / 100% 1px no-repeat;

  &::-webkit-slider-thumb {
    appearance: none;
    width: 4px;
    height: 11px;
    background: #666;
  }
`;

const ZoomValue = styled.span`
  width: 29px;
  margin-left: 7px;
`;

/* ---------- taskbar ---------- */

const TaskbarRow = styled.nav`
  display: flex;
  flex: none;
  height: 40px;
  border-top: 1px solid #5c504b;
  background: linear-gradient(to right, #4b3a31 30%, #3b2825 55%, #2d201e);
`;

const StartButton = styled.button`
  ${center}
  width: 48px;
  background: #4a463a;
`;

const SearchBox = styled.label`
  display: flex;
  align-items: center;
  gap: 9px;
  width: 344px;
  padding-left: 12px;
  border: 1px solid #ccc;
  background: #f1f1f1;

  & input {
    flex: 1;
    font-size: 14px;
  }
  & input::placeholder {
    color: #333;
    opacity: 1;
  }
`;

const Apps = styled.div`
  flex: 1;
  display: flex;
`;

const AppButton = styled.button`
  ${center}
  flex: 1;
  background-color: ${(props) => (props.$active ? "#5e4f4c" : "transparent")};
  background-image: linear-gradient(#76a9dc, #76a9dc);
  background-repeat: no-repeat;
  background-position: bottom;
  background-size: ${(props) => (props.$active ? "100%" : "36px")} ${(props) => (props.$running ? "2px" : "0")};
`;

const TaskViewButton = styled.button`
  ${center}
  width: 48px;
`;

const Tray = styled.div`
  display: flex;
  width: 348px;
  color: #fff;

  & svg {
    fill: none;
    stroke: #eee;
  }
`;

const TrayButton = styled.button`
  ${center}
  width: 32px;
`;

const TrayCaret = styled(TrayButton)`
  width: 26px;
  padding-right: 8px;
`;

const PenButton = styled(TrayButton)`
  width: 40px;
`;

const Clock = styled.button`
  display: flex;
  flex-direction: column;
  align-items: center;
  justify-content: center;
  width: 70px;
  line-height: 18px;
`;

const Notifications = styled.button`
  position: relative;
  width: 48px;
  padding: 0 0 5px 11px;
  border-right: 1px solid #777;

  & svg {
    stroke: none;
  }
`;

const Badge = styled.span`
  ${center}
  position: absolute;
  left: 20px;
  top: 18px;
  width: 16px;
  height: 16px;
  border: 1px solid #888;
  border-radius: 50%;
  background: #2d201e;
  font-size: 11px;
  font-weight: 700;
`;
